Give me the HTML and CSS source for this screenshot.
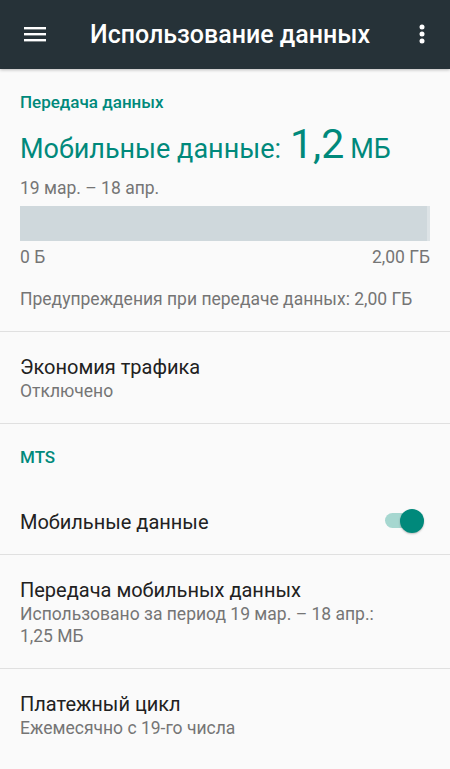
FILE: index.html
```html
<!DOCTYPE html>
<html lang="ru">
<head>
    <meta charset="UTF-8">
    <meta name="viewport" content="width=device-width, initial-scale=1.0">
    <title>Использование данных</title>
    <link rel="stylesheet" href="styles.css">
</head>
<body>
    <header class="toolbar">
        <svg class="menu-icon" width="22" height="16" viewBox="0 0 22 16">
            <rect x="0" y="1" width="22" height="2.4" fill="#fff"/>
            <rect x="0" y="7" width="22" height="2.4" fill="#fff"/>
            <rect x="0" y="13" width="22" height="2.4" fill="#fff"/>
        </svg>
        <h1 class="toolbar-title">Использование данных</h1>
        <svg class="more-icon" width="6" height="20" viewBox="0 0 6 20">
            <circle cx="3" cy="3" r="2.5" fill="#fff"/>
            <circle cx="3" cy="10" r="2.5" fill="#fff"/>
            <circle cx="3" cy="17" r="2.5" fill="#fff"/>
        </svg>
    </header>

    <section class="usage">
        <h2 class="category">Передача данных</h2>
        <div class="usage-total">
            <span class="usage-label">Мобильные данные:</span>
            <span class="usage-value">1,2</span>
            <span class="usage-unit">МБ</span>
        </div>
        <p class="usage-period">19 мар. – 18 апр.</p>
        <div class="chart"></div>
        <div class="chart-axis">
            <span>0 Б</span>
            <span>2,00 ГБ</span>
        </div>
        <p class="usage-warning">Предупреждения при передаче данных: 2,00 ГБ</p>
    </section>

    <div class="pref">
        <div class="pref-title">Экономия трафика</div>
        <div class="pref-summary">Отключено</div>
    </div>

    <h2 class="category category-mts">MTS</h2>

    <div class="pref pref-switch">
        <div class="pref-title">Мобильные данные</div>
        <div class="switch"><span class="switch-thumb"></span></div>
    </div>

    <div class="pref">
        <div class="pref-title">Передача мобильных данных</div>
        <div class="pref-summary">Использовано за период 19 мар. – 18 апр.:<br>1,25 МБ</div>
    </div>

    <div class="pref pref-last">
        <div class="pref-title">Платежный цикл</div>
        <div class="pref-summary">Ежемесячно с 19-го числа</div>
    </div>
</body>
</html>
```

FILE: styles.css
```css
* {
    margin: 0;
    padding: 0;
    box-sizing: border-box;
}
body {
    background-color: #fafafa;
    font-family: Roboto, "Noto Sans", sans-serif;
    color: #212121;
    width: 450px;
    overflow: hidden;
}
.toolbar {
    height: 69px;
    background-color: #263238;
    display: flex;
    align-items: center;
    padding: 0 0 0 24px;
    box-shadow: 0 1px 3px rgba(0, 0, 0, 0.25);
}
.menu-icon {
    flex: none;
    margin-top: -1px;
}
.toolbar-title {
    flex: 1;
    margin-left: 44px;
    color: #fff;
    font-size: 25px;
    font-weight: 500;
}
.more-icon {
    flex: none;
    margin-right: 25px;
    margin-top: -1px;
}
.usage {
    padding: 23px 20px 0;
    border-bottom: 1px solid #e0e0e0;
    height: 263px;
}
.category {
    font-size: 17px;
    line-height: 20px;
    font-weight: 500;
    color: #00897b;
}
.usage-total {
    display: flex;
    align-items: baseline;
    color: #00897b;
    margin-top: 8px;
    height: 57px;
}
.usage-label {
    font-size: 27px;
}
.usage-value {
    font-size: 41px;
    margin-left: 9px;
}
.usage-unit {
    font-size: 27px;
    margin-left: 6px;
}
.usage-period {
    font-size: 17.5px;
    line-height: 22px;
    color: #757575;
}
.chart {
    height: 35px;
    margin-top: 7px;
    background-color: #cfd8dc;
    border-right: 3px solid #dde3e6;
}
.chart-axis {
    display: flex;
    justify-content: space-between;
    font-size: 17.5px;
    line-height: 22px;
    color: #757575;
    margin-top: 5px;
}
.usage-warning {
    font-size: 17.5px;
    line-height: 22px;
    color: #757575;
    margin-top: 20px;
}
.pref {
    padding: 22px 20px 21px;
    border-bottom: 1px solid #e0e0e0;
}
.pref-last {
    border-bottom: none;
}
.pref-title {
    font-size: 20px;
    line-height: 26px;
    color: #212121;
}
.pref-summary {
    font-size: 17.5px;
    line-height: 22px;
    color: #757575;
}
.category-mts {
    padding: 23px 20px 0;
    height: 66px;
}
.pref-switch {
    display: flex;
    align-items: center;
    height: 65px;
    padding: 0 20px;
}
.pref-switch .pref-title {
    flex: 1;
}
.switch {
    position: relative;
    width: 34px;
    height: 15px;
    border-radius: 7.5px;
    background-color: #a6d7d0;
    margin-right: 11px;
    margin-top: -3px;
}
.switch-thumb {
    position: absolute;
    right: -5px;
    top: -4.5px;
    width: 24px;
    height: 24px;
    border-radius: 50%;
    background-color: #00897b;
    box-shadow: 0 1px 2px rgba(0, 0, 0, 0.25);
}
```
